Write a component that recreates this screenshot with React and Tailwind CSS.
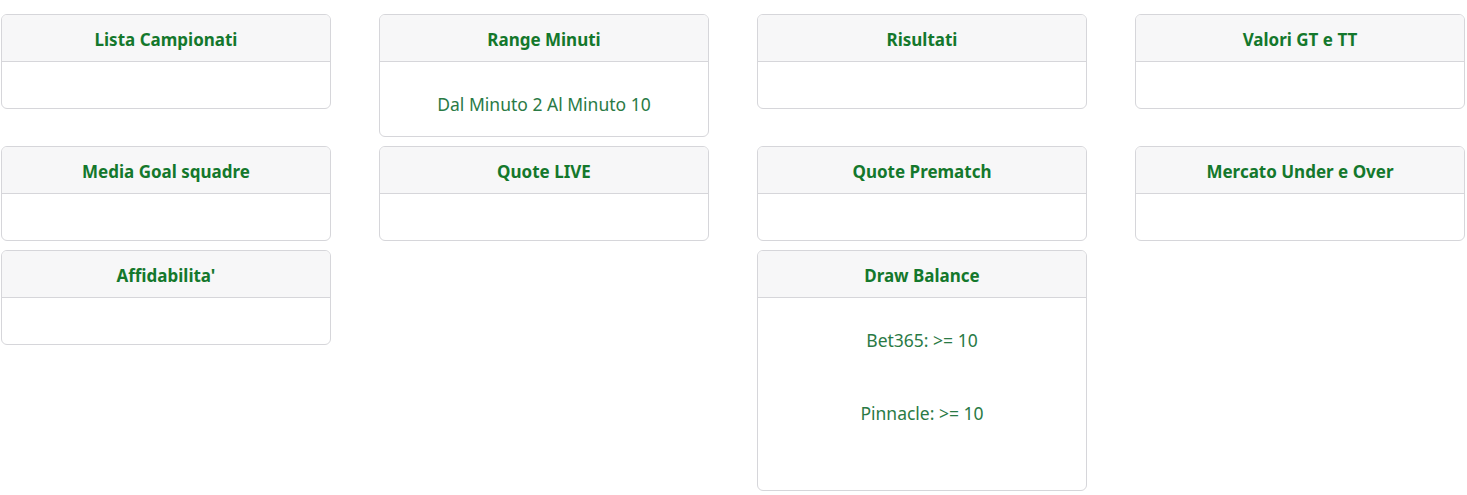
const CARDS = [
  { title: 'Lista Campionati' },
  { title: 'Range Minuti', lines: ['Dal Minuto 2 Al Minuto 10'] },
  { title: 'Risultati' },
  { title: 'Valori GT e TT' },
  { title: 'Media Goal squadre' },
  { title: 'Quote LIVE' },
  { title: 'Quote Prematch' },
  { title: 'Mercato Under e Over' },
  { title: "Affidabilita'" },
  null,
  { title: 'Draw Balance', lines: ['Bet365: >= 10', 'Pinnacle: >= 10'], tall: true },
]

function Card({ title, lines, tall }) {
  return (
    <div className="rounded-[6px] border border-[#d6d6da] bg-white overflow-hidden">
      <div className="bg-[#f7f7f8] border-b border-[#d6d6da] pt-[13px] pb-[9px] text-center text-[17px] leading-[24px] font-bold text-[#14782c]">
        {title}
      </div>
      {!lines ? (
        <div className="h-[46px]" />
      ) : tall ? (
        <div className="pt-[30px] pb-[65px] flex flex-col gap-[49px] text-center text-[17.5px] leading-[24px] text-[#2a7a45]">
          {lines.map((l) => <p key={l}>{l}</p>)}
        </div>
      ) : (
        <div className="pt-[30px] pb-[20px] text-center text-[17.5px] leading-[24px] text-[#2a7a45]">
          {lines.map((l) => <p key={l}>{l}</p>)}
        </div>
      )}
    </div>
  )
}

export default function App() {
  return (
    <div className="min-h-screen bg-white pt-[14px] pl-[1px]" style={{ fontFamily: '"Noto Sans", "Open Sans", sans-serif' }}>
      <div className="grid grid-cols-[repeat(4,330px)] gap-x-[48px] gap-y-[9px] items-start">
        {CARDS.map((c, i) => (c ? <Card key={c.title} {...c} /> : <div key={i} />))}
      </div>
    </div>
  )
}
